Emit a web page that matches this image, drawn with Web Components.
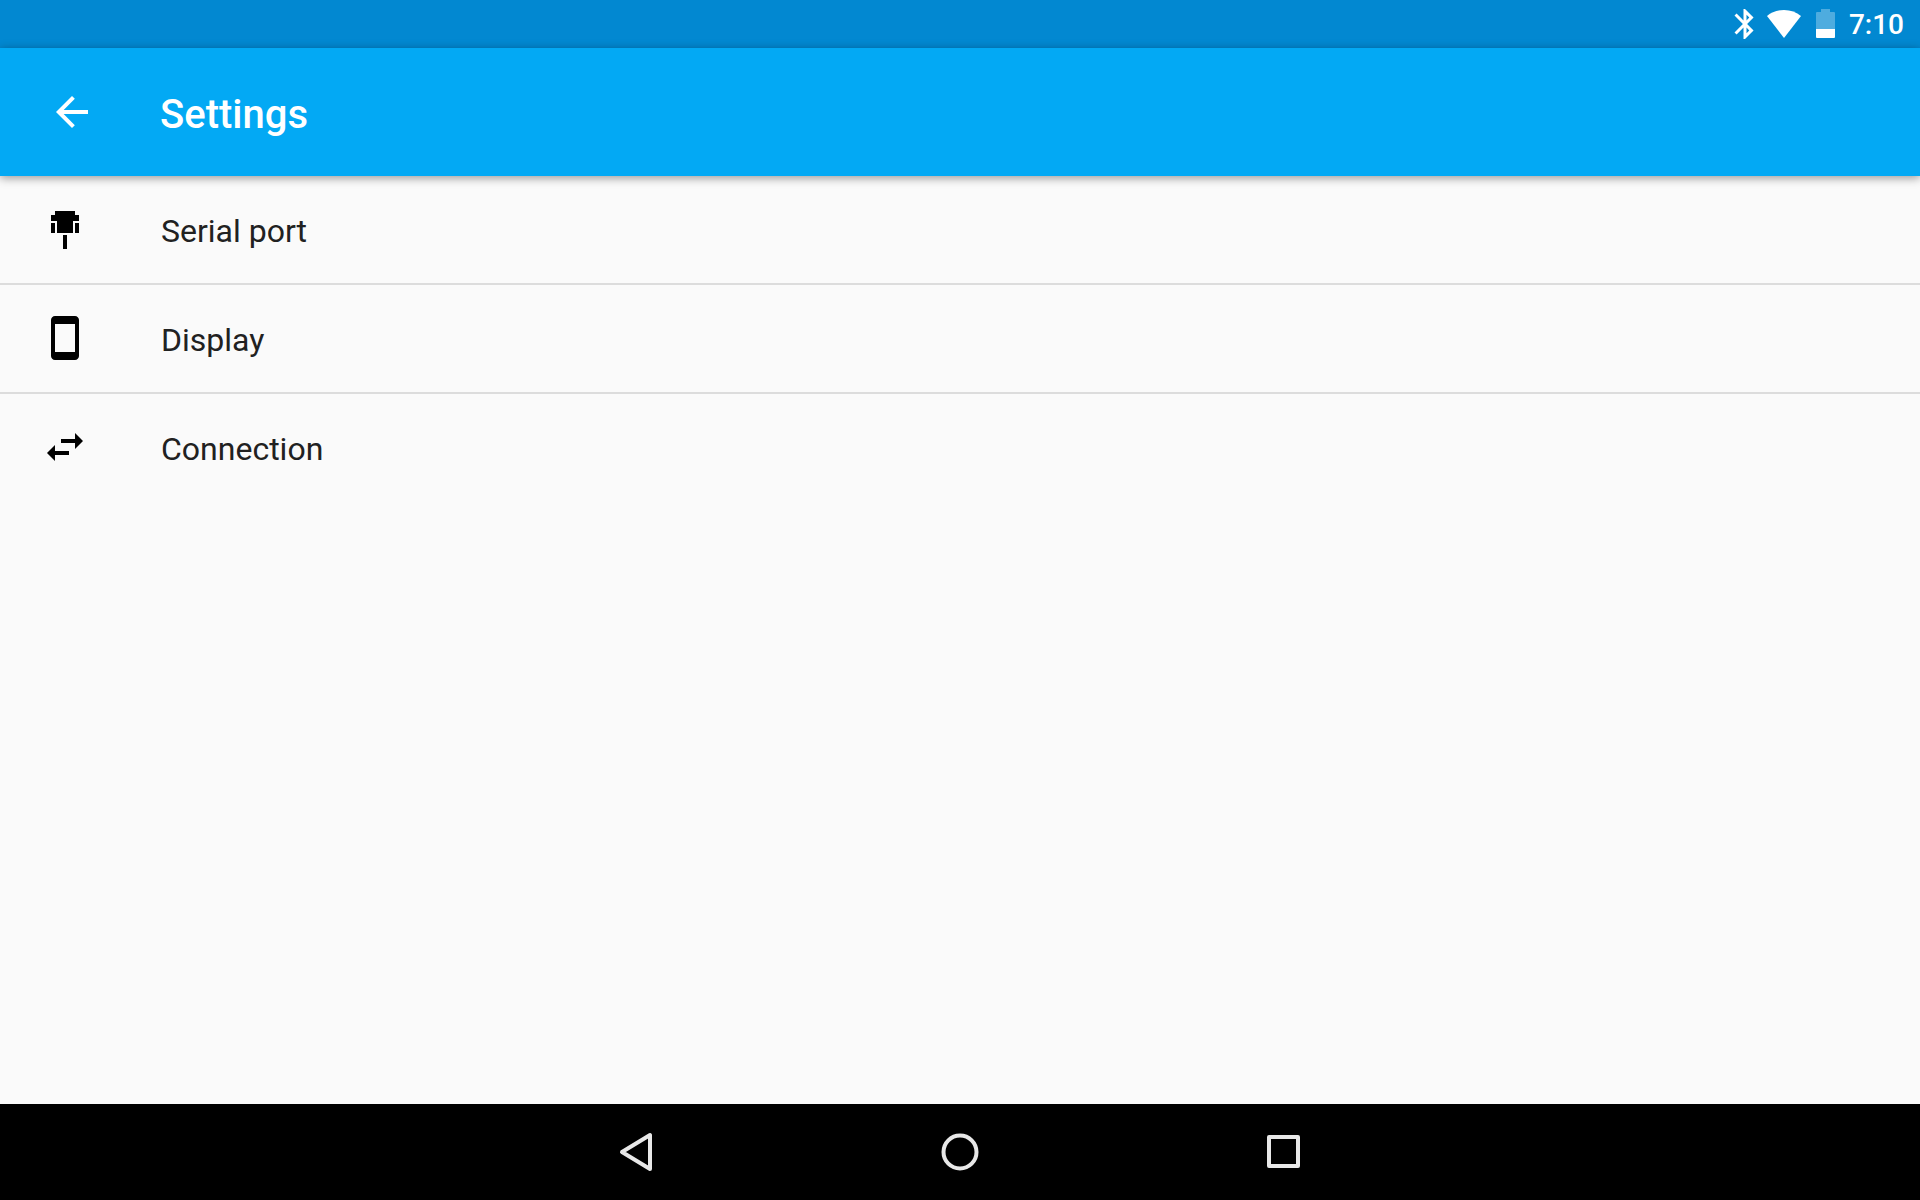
<!DOCTYPE html>
<html lang="en">
<head>
<meta charset="utf-8">
<meta name="viewport" content="width=device-width, initial-scale=1">
<title>Settings</title>
<style>
  body {
    margin: 0;
    font-family: Roboto, sans-serif;
    color: #212121;
    background: #fafafa;
  }
</style>
</head>
<body>

<settings-screen>
  <status-bar slot="status" time="7:10"></status-bar>
  <app-bar slot="header">Settings</app-bar>
  <settings-item icon="serial" href="#serial">Serial port</settings-item>
  <settings-item icon="display" href="#display">Display</settings-item>
  <settings-item icon="connection" href="#connection">Connection</settings-item>
  <nav-bar slot="nav"></nav-bar>
</settings-screen>

<script>
// 24x24 icons for the list rows
const ICONS = {
  serial: "M7 3h10v2h2v3h-3v6H8V8H5V5h2zM5 9h2v5H5zM17 9h2v5h-2zM11 15h2v7h-2z",
  display: "M17 1H7c-1.1 0-2 .9-2 2v18c0 1.1.9 2 2 2h10c1.1 0 2-.9 2-2V3c0-1.1-.9-2-2-2zm0 18H7V5h10v14z",
  connection: "M6.99 11L3 15l3.99 4v-3H14v-2H6.99v-3zM21 9l-3.99-4v3H10v2h7.01v3L21 9z"
};

class SettingsScreen extends HTMLElement {
  constructor() {
    super();
    this.attachShadow({ mode: "open" }).innerHTML = `
      <style>
        :host {
          display: flex;
          flex-direction: column;
          min-height: 100vh;
        }
        main {
          flex: 1;
        }
      </style>
      <slot name="status"></slot>
      <slot name="header"></slot>
      <main><slot></slot></main>
      <slot name="nav"></slot>
    `;
  }
}

class StatusBar extends HTMLElement {
  constructor() {
    super();
    this.attachShadow({ mode: "open" }).innerHTML = `
      <style>
        :host {
          display: flex;
          align-items: center;
          justify-content: flex-end;
          height: 48px;
          padding-right: 16px;
          color: #fff;
          background: #0288d1;
        }
        svg {
          display: block;
          fill: currentColor;
        }
        .wifi {
          margin-left: 4px;
        }
        .battery {
          margin: 0 13px 0 15px;
        }
        time {
          padding-top: 2px;
          font-size: 28px;
          font-weight: 500;
          line-height: 40px;
        }
      </style>
      <svg width="36" height="36" viewBox="0 0 24 24" role="img" aria-label="Bluetooth">
        <path d="M17.71 7.71L12 2h-1v7.59L6.41 5 5 6.41 10.59 12 5 17.59 6.41 19 11 14.41V22h1l5.71-5.71-4.3-4.29 4.3-4.29zM13 5.83l1.88 1.88L13 9.59V5.83zm1.88 10.46L13 18.17v-3.76l1.88 1.88z"/>
      </svg>
      <svg class="wifi" width="34" height="28" viewBox="0 0 34 28" role="img" aria-label="Wi-Fi">
        <path d="M17 28L0 6Q7 0 17 0t17 6z"/>
      </svg>
      <svg class="battery" width="20" height="30" viewBox="0 0 20 30" role="img" aria-label="Battery">
        <path fill-opacity=".3" d="M5 0h9v3h4a1 1 0 0 1 1 1v16H0V4a1 1 0 0 1 1-1h4z"/>
        <path d="M0 20h19v8a1 1 0 0 1-1 1H1a1 1 0 0 1-1-1z"/>
      </svg>
      <time></time>
    `;
  }

  connectedCallback() {
    this.shadowRoot.querySelector("time").textContent = this.getAttribute("time");
  }
}

class AppBar extends HTMLElement {
  constructor() {
    super();
    this.attachShadow({ mode: "open" }).innerHTML = `
      <style>
        :host {
          display: flex;
          align-items: center;
          height: 128px;
          padding: 0 32px;
          position: relative;
          z-index: 1;
          color: #fff;
          background: #03a9f4;
          box-shadow: 0 2px 9px rgba(0, 0, 0, .4);
        }
        button {
          display: flex;
          padding: 16px;
          border: 0;
          color: inherit;
          background: none;
        }
        svg {
          fill: currentColor;
        }
        h1 {
          margin: 0 0 0 48px;
          padding-top: 6px;
          font-size: 40px;
          font-weight: 500;
          line-height: 48px;
        }
      </style>
      <button type="button" aria-label="Back">
        <svg width="48" height="48" viewBox="0 0 24 24">
          <path d="M20 11H7.83l5.59-5.59L12 4l-8 8 8 8 1.41-1.41L7.83 13H20v-2z"/>
        </svg>
      </button>
      <h1><slot></slot></h1>
    `;
  }
}

class SettingsItem extends HTMLElement {
  constructor() {
    super();
    this.attachShadow({ mode: "open" }).innerHTML = `
      <style>
        :host {
          display: block;
          border-bottom: 2px solid #dcdcdc;
        }
        :host(:last-of-type) {
          border-bottom: 0;
        }
        a {
          display: flex;
          align-items: center;
          gap: 72px;
          height: 107px;
          padding: 0 41px;
          color: inherit;
          font-size: 32px;
          line-height: 40px;
          text-decoration: none;
        }
        svg {
          flex: none;
          margin-bottom: 1px;
          fill: #000;
        }
        span {
          padding-top: 3px;
        }
      </style>
      <a>
        <svg width="48" height="48" viewBox="0 0 24 24" aria-hidden="true"><path/></svg>
        <span><slot></slot></span>
      </a>
    `;
  }

  connectedCallback() {
    this.shadowRoot.querySelector("a").href = this.getAttribute("href");
    this.shadowRoot.querySelector("path").setAttribute("d", ICONS[this.getAttribute("icon")]);
  }
}

class NavBar extends HTMLElement {
  constructor() {
    super();
    this.attachShadow({ mode: "open" }).innerHTML = `
      <style>
        :host {
          display: block;
          background: #000;
        }
        nav {
          display: flex;
          justify-content: center;
        }
        button {
          display: flex;
          align-items: center;
          justify-content: center;
          flex: 0 1 324px;
          height: 96px;
          padding: 0;
          border: 0;
          background: none;
        }
        svg {
          fill: none;
          stroke: #e8e8e8;
          stroke-width: 4;
          stroke-linejoin: round;
        }
      </style>
      <nav>
        <button type="button" aria-label="Back">
          <svg width="40" height="40" viewBox="0 0 40 40"><path d="M34 3v34L6 20z"/></svg>
        </button>
        <button type="button" aria-label="Home">
          <svg width="40" height="40" viewBox="0 0 40 40"><circle cx="20" cy="20" r="16.5"/></svg>
        </button>
        <button type="button" aria-label="Recent apps">
          <svg width="40" height="40" viewBox="0 0 40 40"><rect x="5" y="5" width="29" height="29"/></svg>
        </button>
      </nav>
    `;
  }
}

customElements.define("settings-screen", SettingsScreen);
customElements.define("status-bar", StatusBar);
customElements.define("app-bar", AppBar);
customElements.define("settings-item", SettingsItem);
customElements.define("nav-bar", NavBar);
</script>
</body>
</html>
